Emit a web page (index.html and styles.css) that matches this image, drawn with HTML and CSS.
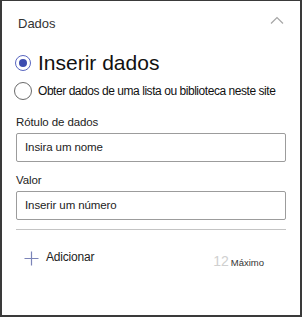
FILE: index.html
```html
<!DOCTYPE html>
<html>
<head>
<meta charset="utf-8">
<link rel="stylesheet" href="styles.css">
</head>
<body>
<div class="panel">
  <div class="header">
    <span class="title">Dados</span>
    <svg class="chev" width="14" height="8" viewBox="0 0 14 8"><path d="M1 7.5 L7 1.5 L13 7.5" fill="none" stroke="#a6a6a6" stroke-width="1.2"/></svg>
  </div>
  <div class="radios">
    <div class="radio-row big">
      <span class="radio on"><span class="dot"></span></span>
      <span class="rlabel-big">Inserir dados</span>
    </div>
    <div class="radio-row small">
      <span class="radio off"></span>
      <span class="rlabel-small">Obter dados de uma lista ou biblioteca neste site</span>
    </div>
  </div>
  <div class="field first">
    <div class="flabel">Rótulo de dados</div>
    <div class="input">Insira um nome</div>
  </div>
  <div class="field">
    <div class="flabel">Valor</div>
    <div class="input">Inserir um número</div>
  </div>
  <div class="sep"></div>
  <div class="addrow">
    <div class="add">
      <svg width="15" height="15" viewBox="0 0 15 15"><path d="M7.5 0.5 V14.5 M0.5 7.5 H14.5" stroke="#7b84b8" stroke-width="1.2" fill="none"/></svg>
      <span class="addtxt">Adicionar</span>
    </div>
    <div class="max"><span class="num">12</span><span class="maxtxt">Máximo</span></div>
  </div>
</div>
</body>
</html>
```
FILE: styles.css
```css
html, body { margin: 0; padding: 0; background: #fff; }
body { width: 302px; height: 317px; overflow: hidden; font-family: "Liberation Sans", Arial, sans-serif; color: #222; }
.panel {
  box-sizing: border-box;
  width: 302px; height: 317px;
  border: 2px solid #3a3a3a;
  border-top-width: 1px;
  padding: 0 16px 0 13px;
}
.header { display: flex; justify-content: space-between; align-items: center; height: 44px; padding-left: 3px; }
.title { font-size: 13px; color: #333; margin-top: 1px; }
.chev { margin-right: 0; margin-top: -6px; }
.radios { margin-top: 6px; }
.radio-row { display: flex; align-items: center; }
.radio-row.big { height: 24px; }
.radio-row.small { height: 20px; margin-top: 6px; }
.radio { box-sizing: border-box; width: 16px; height: 16px; border-radius: 50%; display: flex; align-items: center; justify-content: center; flex: none; }
.radio.on { border: 1.5px solid #5966c0; margin-left: 0; }
.radio .dot { width: 8px; height: 8px; border-radius: 50%; background: #3d4db0; }
.radio.off { border: 1.5px solid #6a6a6a; width: 18px; height: 18px; margin-left: -1px; }
.rlabel-big { font-size: 21px; color: #111; margin-left: 7px; letter-spacing: 0; }
.rlabel-small { font-size: 12px; color: #111; margin-left: 6px; letter-spacing: -0.45px; white-space: nowrap; }
.field.first { margin-top: 14px; }
.field { padding-left: 1px; }
.flabel { font-size: 11.5px; color: #222; height: 18px; line-height: 14px; letter-spacing: -0.1px; }
.input {
  box-sizing: border-box; width: 270px; height: 29px;
  border: 1px solid #9c9c9c; border-radius: 2px;
  font-size: 11.5px; color: #222; padding-left: 8px; line-height: 27px; margin-top: 0;
  letter-spacing: -0.1px;
}
.field + .field { margin-top: 11px; }
.sep { width: 270px; height: 1px; background: #c4c4c4; margin-top: 9px; margin-left: 1px; }
.addrow { display: flex; justify-content: space-between; align-items: center; margin-top: 17px; width: 270px; }
.add { display: flex; align-items: center; padding-left: 9px; }
.addtxt { font-size: 12px; color: #222; margin-left: 7px; margin-top: -2px; letter-spacing: -0.2px; }
.max { margin-right: 21px; margin-top: 6px; display: flex; align-items: baseline; }
.num { font-size: 14px; color: #d0d0d0; }
.maxtxt { font-size: 9.5px; color: #333; margin-left: 2px; }
```
